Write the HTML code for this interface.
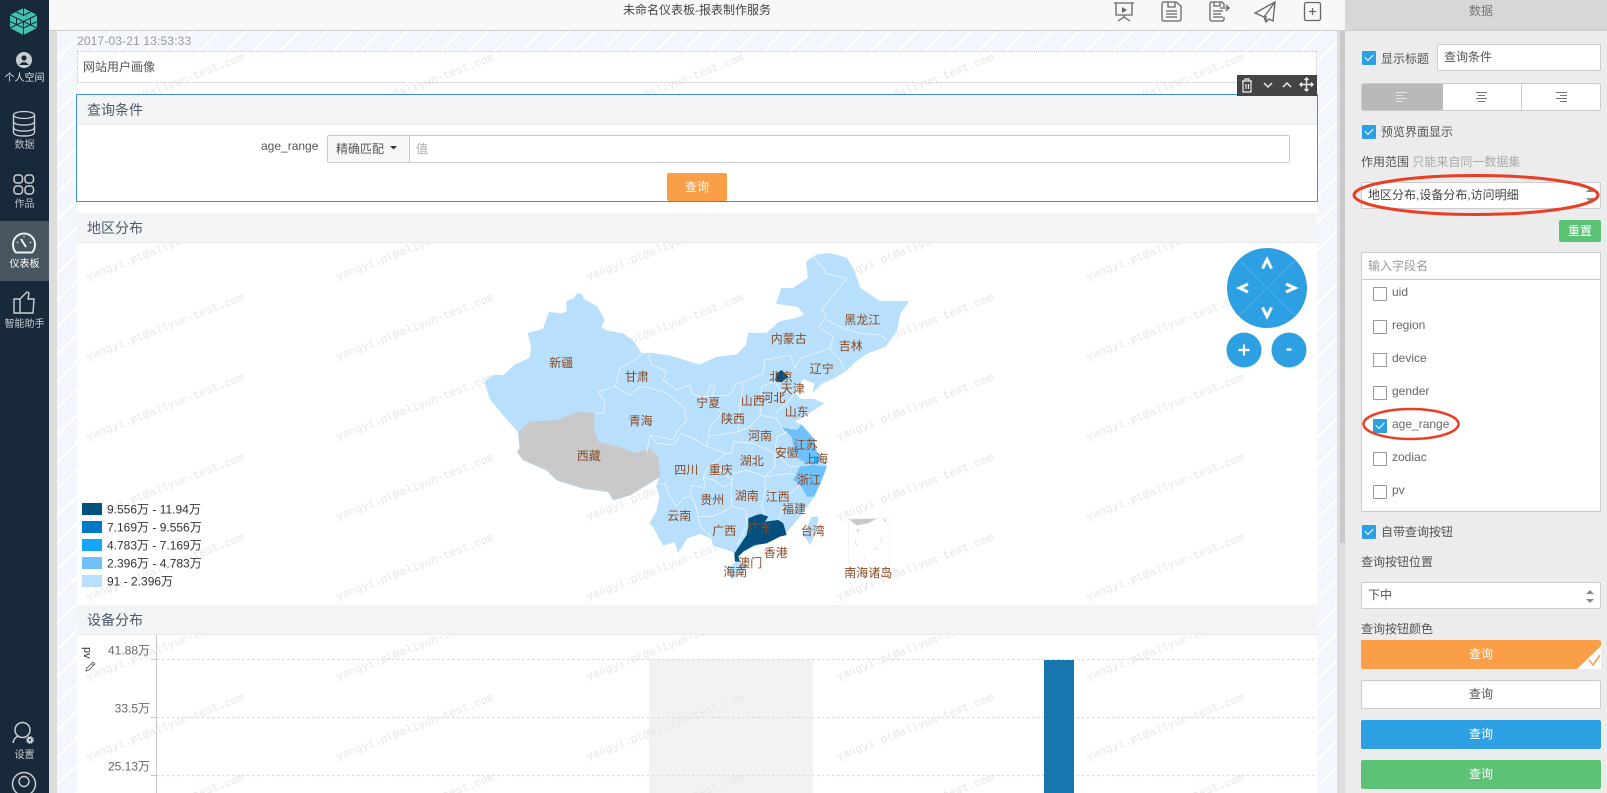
<!DOCTYPE html>
<html lang="zh"><head><meta charset="utf-8"><title>未命名仪表板-报表制作服务</title>
<style>
html,body{margin:0;padding:0}
body{width:1607px;height:793px;overflow:hidden;position:relative;background:#fff;font-family:"Liberation Sans","Noto Sans CJK SC",sans-serif;font-size:12px;color:#555}
.a{position:absolute;box-sizing:border-box}
.t{position:absolute;line-height:18px;white-space:nowrap}
.c{text-align:center}
.hd{position:absolute;box-sizing:border-box;left:77px;width:1240px;background:#f3f4f6;border-bottom:1px solid #e8eaed;font-size:14px;color:#4c5a68;padding-left:10px;line-height:30px}
.cb{position:absolute;width:14px;height:14px;box-sizing:border-box;background:#fff;border:1px solid #999;border-radius:1px}
.cb.on{background:#2da0e3;border:0}
.cb.on:after{content:"";position:absolute;left:3px;top:2.5px;width:7px;height:4px;border-left:1.6px solid #fff;border-bottom:1.6px solid #fff;transform:rotate(-45deg)}
.inp{position:absolute;box-sizing:border-box;background:#fff;border:1px solid #ccc;border-radius:2px;line-height:25px;padding-left:6px;color:#555}
.btn{position:absolute;box-sizing:border-box;left:1361px;width:240px;height:29px;line-height:29px;text-align:center;color:#fff;border-radius:2px}
.nav{position:absolute;left:0;width:49px;text-align:center;font-size:10px;line-height:14px;color:#d3d7da}
svg{position:absolute;left:0;top:0}
svg text{font-family:"Liberation Sans","Noto Sans CJK SC",sans-serif}
</style></head><body>

<!-- stripes + tracks -->
<div class="a" style="left:57px;top:31px;width:1280px;height:762px;background:repeating-linear-gradient(-45deg,#f3f6fd 0 17px,#fff 17px 19px)"></div>
<div class="a" style="left:49px;top:31px;width:8px;height:762px;background:#ddd"></div>
<div class="a" style="left:1337px;top:31px;width:8px;height:762px;background:#ddd"></div>
<div class="a" style="left:1340px;top:31px;width:5px;height:512px;background:#c9c9c9"></div>
<div class="a" style="left:77px;top:51px;width:1240px;height:742px;background:#fff"></div>
<div class="a" style="left:649px;top:659px;width:164px;height:134px;background:#f2f2f2"></div>

<!-- watermark -->
<svg width="1607" height="793" style="z-index:1">
<defs><pattern id="wm" patternUnits="userSpaceOnUse" x="86" y="52" width="250" height="80">
<text x="2" y="68" transform="rotate(-21 2 68)" style="font-family:'Liberation Mono',monospace;font-size:11.2px" fill="#e6e6e6">yangyi.pt@aliyun-test.com</text>
</pattern></defs>
<rect x="77" y="51" width="1240" height="742" fill="url(#wm)"/>
</svg>

<div style="position:absolute;left:0;top:0;width:1607px;height:793px;z-index:2">

<!-- top bar -->
<div class="a" style="left:49px;top:0;width:1296px;height:31px;background:#f8f8f8;border-bottom:1.5px solid #ccc"></div>
<div class="t c" style="left:49px;width:1296px;top:1px;color:#444">未命名仪表板-报表制作服务</div>
<svg width="1607" height="31" fill="none" stroke="#666" stroke-width="1.300">
<path d="M1114 3h20M1116 3v12h16V3M1124 15v2M1124 17l-6 4M1124 17l6 4"/><path d="M1122 7l5 3-5 3z" fill="#666" stroke="none"/>
<path d="M1164 2h12l5 4v13q0 2-2 2h-15q-2 0-2-2V4q0-2 2-2zM1168 2v5h7V2M1166 11h11M1166 14h11M1166 17h11"/>
<path d="M1212 2h10l2 2v3M1224 17v2q0 2-2 2h-10q-2 0-2-2V4q0-2 2-2M1214 2v4h6V2M1213 11h10M1213 14h8M1213 17h10M1220 8h9M1226 5l3 3-3 3"/>
<path d="M1275 2L1255 13l9 4 2 5 3-3 4 2zM1275 2l-11 15M1266 22v-6"/>
<rect x="1304.500" y="2.500" width="16" height="18" rx="2"/><path d="M1312.500 8v7M1309 11.500h7"/>
</svg>

<!-- date + title -->
<div class="t" style="left:77px;top:32px;color:#999;letter-spacing:.15px">2017-03-21 13:53:33</div>
<div class="a" style="left:77px;top:51px;width:1240px;height:32px;border:1px dotted #c4c4c4"></div>
<div class="t" style="left:83px;top:58px;color:#555">网站用户画像</div>

<!-- query box -->
<div class="a" style="left:76px;top:94px;width:1242px;height:108px;background:#fff;border:1px solid #3f8ae8"></div>
<div class="hd" style="top:95px;height:30px">查询条件</div>
<div class="t" style="left:261px;top:137px;color:#555">age_range</div>
<div class="a" style="left:327px;top:135px;width:963px;height:28px;background:#fff;border:1px solid #ccc;border-radius:2px"></div>
<div class="a" style="left:328px;top:136px;width:82px;height:26px;background:#f8f8f8;border-right:1px solid #ccc"></div>
<div class="t" style="left:336px;top:140px;color:#555">精确匹配</div>
<svg width="1607" height="200"><path d="M390 146h7l-3.500 3.500z" fill="#333"/></svg>
<div class="t" style="left:416px;top:140px;color:#aaa">值</div>
<div class="a c" style="left:667px;top:173px;width:60px;height:28px;background:#fb9e48;color:#fff;line-height:28px;border-radius:2px">查询</div>

<!-- toolbar -->
<div class="a" style="left:1237px;top:75px;width:80px;height:21px;background:#444"></div>
<svg width="1607" height="100" fill="none" stroke="#eee" stroke-width="1.200">
<path d="M1242 81h10M1245 81v-2h4v2M1243 81v11h8V81M1246 84v5M1248.500 84v5"/>
<path d="M1264 83l4 4 4-4M1283 87l4-4 4 4" stroke-width="1.500"/>
<path d="M1306.500 78v13M1300 84.500h13M1304.500 80l2-2 2 2M1304.500 89l2 2 2-2M1302 82.500l-2 2 2 2M1311 82.500l2 2-2 2" stroke-width="1.400"/>
</svg>

<!-- region header -->
<div class="hd" style="top:213px;height:30px">地区分布</div>

<!-- nav control -->
<svg width="1607" height="793">
<circle cx="1267" cy="288" r="40" fill="#2da0e3"/>
<path d="M1238.700 259.700l56.600 56.600M1295.300 259.700l-56.600 56.600" stroke="#5fb6ea" stroke-width=".6"/>
<g fill="none" stroke="#fff" stroke-width="3"><path d="M1262.500 268.500l4.500-9 4.500 9M1262.500 307.500l4.500 9 4.500-9M1248 284l-8.500 4 8.500 4M1286 284l9 4-9 4"/></g>
<circle cx="1244" cy="350" r="17.500" fill="#2da0e3"/><circle cx="1289" cy="350" r="17.500" fill="#2da0e3"/>
<path d="M1238.500 350h11M1244 344.500v11M1286.500 349.500h5" stroke="#fff" stroke-width="2.200"/>
</svg>

<!-- map -->
<svg width="1607" height="793">
<g transform="translate(460 240) scale(.33333)" stroke-linejoin="round">
<path fill="#b8dffb" stroke="#b8dffb" stroke-width="3" d="M75 425L105 405 130 408 165 375 210 355 215 320 205 280 250 268 268 217 305 222 322 215 320 185 345 175 350 162 365 163 370 178 410 200 422 220 432 240 422 262 440 273 490 282 520 305 545 342 570 340 630 348 700 370 720 375 770 352 830 345 860 315 865 280 920 280 960 245 1010 235 1035 225 1015 200 950 190 965 145 1000 145 1045 115 1040 65 1070 45 1110 40 1160 55 1180 90 1200 145 1260 185 1345 185 1320 220 1310 270 1275 320 1220 340 1185 365 1160 390 1120 415 1085 430 1060 455 1065 430 1030 415 1015 440 1005 460 1020 478 1060 478 1090 490 1060 510 1030 530 1000 545 1025 555 1060 595 1070 635 1100 680 1085 720 1062 770 1040 800 1010 840 975 880 925 905 860 925 825 945 820 935 790 925 760 915 755 895 720 880 680 895 655 935 645 905 610 915 580 860 570 850 590 815 600 770 590 740 600 710 560 735 510 765 460 780 445 755 370 745 290 720 260 690 190 660 172 635 180 625 175 575 135 530 90 475z"/>
<path fill="#b8dffb" d="M800 985L830 965 860 970 850 1000 815 1018zM1030 885L1055 830 1075 830 1070 875 1050 915z"/>
<path fill="#c9c9c9" d="M600 710L595 650 570 625 525 640 490 625 415 605 400 560 405 520 355 515 290 540 210 545 175 575 180 625 172 635 190 660 260 690 290 720 370 745 445 755 460 780 510 765 560 735z"/>
<g fill="none" stroke="#eef7fe" stroke-width="2.400">
<path d="M545 342L530 355 480 385 465 440 415 455 435 490 430 520 405 520"/>
<path d="M465 440L510 465 540 440 575 445 620 460 670 500 680 540 650 575 640 600 600 590 570 585 560 640"/>
<path d="M565 340L575 375 620 395 610 420 650 450 690 435 695 460 720 470 810 465 830 430 855 425 910 400 915 360 990 345 1005 385 1020 355 1050 345 1110 325 1140 360 1155 390"/>
<path d="M740 470L750 435 765 440 755 480 785 520 750 560 745 590"/>
<path d="M1110 325L1120 290 1075 260 1100 230 1085 210 1160 115 1100 100 1060 50"/>
<path d="M1100 240L1150 265 1200 280 1260 285 1280 300"/>
<path d="M850 430L840 500 835 575 870 560 900 525 905 440 945 425 960 450 1000 460"/>
<path d="M900 525L950 535 975 580 950 590 945 640 990 680 1020 680M975 580L1000 560M945 520L980 490 1005 460"/>
<path d="M570 585L590 610 640 615 665 580 710 600 740 620 800 640 745 680 730 710 735 745 695 735 690 770 670 775 650 800 630 770 615 730 600 735"/>
<path d="M745 590L740 620M835 575L745 590M800 640L815 640 820 605 880 610 945 640 945 680 915 710 860 690 820 700 815 730 790 740 760 720 730 710"/>
<path d="M745 680L770 680 815 720"/>
<path d="M695 770L705 790 715 830 755 830 800 810 815 800 815 730M715 830L720 860 755 890"/>
<path d="M815 800L860 810 860 845 850 880 830 915"/>
<path d="M915 710L915 750 905 800 915 825 910 850M915 710L950 705 1000 700 1020 735 990 760 975 790 960 825 950 850"/>
<path d="M1040 770L1020 735"/>
</g>
<path fill="#6ec1fb" d="M965 562L1010 570 1025 555 1060 595 1070 635 1085 655 1060 675 1020 660 1000 620 995 590z"/>
<path fill="#6ec1fb" d="M1020 680L1060 675 1100 680 1085 720 1062 770 1040 770 1020 735 1000 720z"/>
<path fill="#14a6fb" d="M1063 648L1076 652 1072 672 1062 668z"/>
<path fill="#03507f" d="M865 835L890 825 902 822 925 830 915 845 955 840 970 850 980 885 960 890 920 910 885 915 850 935 835 950 840 965 825 965 823 940 840 915 860 885 865 860zM945 422L950 400 965 390 975 400 985 410 965 427z"/>
<rect x="1165" y="835" width="123" height="150" fill="#fff" stroke="#eee" stroke-width="2"/>
<path fill="#c9c9c9" d="M1167 838L1250 836 1225 850 1190 856zM1190 868l8 0-6 10zM1270 838l8 0-2 10z"/>
<path d="M1185 900l6 20M1265 890l-2 14M1240 930l14-8M1210 950l8 6" stroke="#e4e4e4" stroke-width="3" fill="none"/>
</g>
<g font-size="12" fill="#8b4a23" text-anchor="middle">
<text x="561.300" y="367">新疆</text><text x="636.700" y="381">甘肃</text><text x="640.700" y="425">青海</text><text x="588.700" y="460">西藏</text>
<text x="788.700" y="343">内蒙古</text><text x="862.300" y="324">黑龙江</text><text x="850.700" y="350">吉林</text><text x="821.700" y="373">辽宁</text>
<text x="781" y="381">北京</text><text x="792.700" y="393">天津</text><text x="773.300" y="402">河北</text><text x="752.700" y="405">山西</text>
<text x="708.300" y="407">宁夏</text><text x="733" y="423">陕西</text><text x="796.700" y="416">山东</text><text x="760" y="440">河南</text>
<text x="805.700" y="449">江苏</text><text x="786.700" y="457">安徽</text><text x="816" y="463">上海</text><text x="751.700" y="465">湖北</text>
<text x="686.300" y="474">四川</text><text x="720.700" y="474">重庆</text><text x="809" y="484">浙江</text><text x="746.700" y="500">湖南</text>
<text x="777.700" y="501">江西</text><text x="712.300" y="504">贵州</text><text x="794" y="513">福建</text><text x="679.300" y="520">云南</text>
<text x="724.300" y="535">广西</text><text x="760" y="532">广东</text><text x="812.700" y="535">台湾</text><text x="775.700" y="557">香港</text>
<text x="750.300" y="567">澳门</text><text x="735.300" y="576">海南</text><text x="868.300" y="577">南海诸岛</text>
</g>
<!-- legend -->
<rect x="82" y="503" width="20" height="12" fill="#03507f"/><rect x="82" y="521" width="20" height="12" fill="#0079c6"/><rect x="82" y="539" width="20" height="12" fill="#14a6fb"/><rect x="82" y="557" width="20" height="12" fill="#6ec1fb"/><rect x="82" y="575" width="20" height="12" fill="#b8dffb"/>
<g font-size="12" fill="#333"><text x="107" y="513.500">9.556万 - 11.94万</text><text x="107" y="531.500">7.169万 - 9.556万</text><text x="107" y="549.500">4.783万 - 7.169万</text><text x="107" y="567.500">2.396万 - 4.783万</text><text x="107" y="585.500">91 - 2.396万</text></g>
</svg>

<!-- device header + chart -->
<div class="hd" style="top:605px;height:30px">设备分布</div>
<svg width="1607" height="793">
<g stroke="#dcdcdc" stroke-width="1.300" stroke-dasharray="2.500 2.500"><path d="M157 659.500H1317M157 717.500H1317M157 775.500H1317"/></g>
<path d="M156.500 635V793M151 659.500h6M151 717.500h6M151 775.500h6" stroke="#c8c8c8" fill="none"/>
<rect x="1044" y="660" width="30" height="133" fill="#1776ad"/>
<g font-size="12" fill="#666" text-anchor="end"><text x="150" y="654.500">41.88万</text><text x="150" y="712.500">33.5万</text><text x="150" y="770.500">25.13万</text></g>
<text x="87" y="647" font-size="11" fill="#333" transform="rotate(90 87 647)" dominant-baseline="middle">pv</text>
<path d="M86 671l1-3 6-6 2 2-6 6zM91.500 663.500l2 2" fill="none" stroke="#666" stroke-width=".9"/>
</svg>

<!-- sidebar -->
<div class="a" style="left:0;top:0;width:49px;height:793px;background:#182a3a"></div>
<div class="a" style="left:0;top:221px;width:49px;height:60px;background:#47555f"></div>
<svg width="49" height="793" fill="none" stroke="#c8ced2" stroke-width="1.300">
<path d="M23.500 8L37 15V28L23.500 35 10 28V15z" fill="#44c2b1" stroke="none"/>
<path d="M23.500 8V16M10 15l13.500 6.500L37 15M10 21.500l13.500 6.500 13.500-6.500M16.500 12l7 3.500 7-3.500M16.500 18v7M30.500 18v7M23.500 21.500V35M10 28l13.500-6.500L37 28" stroke="#182a3a" stroke-width="1"/>
<circle cx="24" cy="60" r="8" fill="#c8ced2" stroke="none"/><circle cx="24" cy="58" r="2.600" fill="#182a3a" stroke="none"/><path d="M19 65q5-6 10 0z" fill="#182a3a" stroke="none"/>
<ellipse cx="24" cy="115" rx="10.500" ry="3.500"/><path d="M13.500 115v17q0 4 10.500 4t10.500-4v-17M13.500 121q0 4 10.500 4t10.500-4M13.500 127q0 4 10.500 4t10.500-4" stroke-width="1.400"/>
<g stroke-width="1.500"><rect x="14" y="175" width="8.500" height="8" rx="3"/><rect x="25" y="175" width="8.500" height="8" rx="3"/><rect x="14" y="186" width="8.500" height="8" rx="3"/><rect x="25" y="186" width="8.500" height="8" rx="3"/></g>
<path d="M16 252.500q-3-3-3-8a11 11 0 0 1 22 0q0 5-3 8z" stroke="#eef0f1" stroke-width="2"/><path d="M21 239l5 8" stroke="#eef0f1" stroke-width="2"/><path d="M17 242l1 1M31 242l-1 1M24 236v1" stroke="#eef0f1"/>
<path d="M14 299h6v14h-6zM20 299l7-7 2 1-1 6h6l-1 14H20" stroke-width="1.400"/>
<circle cx="22.500" cy="730" r="7.500" stroke-width="1.500"/><path d="M13 743q1-6 6-7" stroke-width="1.500"/><circle cx="30" cy="740" r="3" fill="#c8ced2" stroke-dasharray="1.500 .8" stroke-width="1.800"/><circle cx="30" cy="740" r="1" fill="#182a3a" stroke="none"/>
<circle cx="24" cy="784" r="11.500" stroke-width="1.500"/><circle cx="24" cy="781.500" r="5" stroke-width="1.400"/>
</svg>
<div class="nav" style="top:72px;color:#dfe2e4">个人空间</div>
<div class="nav" style="top:139px;color:#b8bfc4">数据</div>
<div class="nav" style="top:198px;color:#b8bfc4">作品</div>
<div class="nav" style="top:258px;color:#fff">仪表板</div>
<div class="nav" style="top:318px;color:#c8ced2">智能助手</div>
<div class="nav" style="top:749px;color:#c8ced2">设置</div>

<!-- right panel -->
<div class="a" style="left:1345px;top:0;width:262px;height:793px;background:#ececec"></div>
<div class="a" style="left:1345px;top:0;width:262px;height:31px;background:#d7d7d7;border-bottom:1.5px solid #ccc"></div>
<div class="t c" style="left:1345px;width:272px;top:2px;color:#777">数据</div>

<div class="cb on" style="left:1362px;top:51px"></div>
<div class="t" style="left:1381px;top:50px">显示标题</div>
<div class="inp" style="left:1437px;top:44px;width:164px;height:27px">查询条件</div>

<div class="a" style="left:1361px;top:83px;width:240px;height:28px;background:#fff;border:1px solid #ccc;border-radius:3px;overflow:hidden">
<div class="a" style="left:0;top:0;width:81px;height:26px;background:#b9b9b9"></div>
<div class="a" style="left:159px;top:0;width:1px;height:26px;background:#ccc"></div>
</div>
<svg width="1607" height="300" fill="none" stroke-width="1">
<path d="M1396 92.500h11M1396 95.500h7M1396 98.500h11M1396 101.500h7" stroke="#e4e4e4"/>
<path d="M1476 92.500h11M1478 95.500h7M1476 98.500h11M1478 101.500h7" stroke="#777"/>
<path d="M1556 92.500h11M1560 95.500h7M1556 98.500h11M1560 101.500h7" stroke="#777"/>
</svg>

<div class="cb on" style="left:1362px;top:125px"></div>
<div class="t" style="left:1381px;top:123px">预览界面显示</div>
<div class="t" style="left:1361px;top:153px">作用范围 <span style="color:#aaa">只能来自同一数据集</span></div>
<div class="inp" style="left:1361px;top:182px;width:240px;height:27px;color:#444">地区分布,设备分布,访问明细</div>
<div class="a c" style="left:1559px;top:220px;width:42px;height:22px;line-height:22px;background:#5cc276;color:#fff;border-radius:2px">重置</div>

<div class="a" style="left:1361px;top:252px;width:240px;height:260px;background:#fff;border:1px solid #ccc"></div>
<div class="a" style="left:1361px;top:252px;width:240px;height:28px;border:1px solid #ccc;background:#fff;border-radius:2px 2px 0 0"></div>
<div class="t" style="left:1368px;top:257px;color:#999">输入字段名</div>

<div class="cb" style="left:1373px;top:287px"></div><div class="t" style="left:1392px;top:283px;color:#666">uid</div>
<div class="cb" style="left:1373px;top:320px"></div><div class="t" style="left:1392px;top:316px;color:#666">region</div>
<div class="cb" style="left:1373px;top:353px"></div><div class="t" style="left:1392px;top:349px;color:#666">device</div>
<div class="cb" style="left:1373px;top:386px"></div><div class="t" style="left:1392px;top:382px;color:#666">gender</div>
<div class="cb on" style="left:1373px;top:419px"></div><div class="t" style="left:1392px;top:415px;color:#666">age_range</div>
<div class="cb" style="left:1373px;top:452px"></div><div class="t" style="left:1392px;top:448px;color:#666">zodiac</div>
<div class="cb" style="left:1373px;top:485px"></div><div class="t" style="left:1392px;top:481px;color:#666">pv</div>

<div class="cb on" style="left:1362px;top:525px"></div>
<div class="t" style="left:1381px;top:523px">自带查询按钮</div>
<div class="t" style="left:1361px;top:553px">查询按钮位置</div>
<div class="inp" style="left:1361px;top:582px;width:240px;height:27px;color:#555">下中</div>
<div class="t" style="left:1361px;top:620px">查询按钮颜色</div>

<div class="btn" style="top:640px;background:#fb9e48">查询</div>
<div class="btn" style="top:680px;background:#fff;border:1px solid #ccc;line-height:27px;color:#555">查询</div>
<div class="btn" style="top:720px;background:#2da0e3">查询</div>
<div class="btn" style="top:760px;background:#5cc276">查询</div>

<svg width="1607" height="793" fill="none">
<path d="M1601 646v23h-24z" fill="#fff"/>
<path d="M1589 660l4 5 7-10" stroke="#fb9e48" stroke-width="1.600"/>
<path d="M1586 192l4-4 4 4zM1586 198l4 4 4-4z" fill="#888"/>
<path d="M1586 594l4-4 4 4zM1586 599l4 4 4-4z" fill="#888"/>
<ellipse cx="1476" cy="195" rx="122" ry="19.500" stroke="#ea3f25" stroke-width="3"/>
<ellipse cx="1411" cy="424" rx="47.500" ry="15" stroke="#ea3f25" stroke-width="2.500"/>
</svg>

</div>
</body></html>
